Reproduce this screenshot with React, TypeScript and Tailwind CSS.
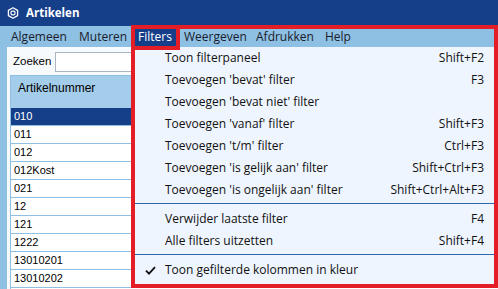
import React from 'react';

const rows = ['010', '011', '012', '012Kost', '021', '12', '121', '1222', '13010201', '13010202'];

const menuItems = [
  { label: 'Algemeen', w: 'w-[68px]' },
  { label: 'Muteren', w: 'w-[59px]' },
  { label: 'Filters', w: 'w-[46px]' },
  { label: 'Weergeven', w: 'w-[72px]' },
  { label: 'Afdrukken', w: 'w-[69px]' },
  { label: 'Help', w: 'w-[38px]' },
];

type Entry = { label: string; shortcut?: string; checked?: boolean } | 'sep';

const filterMenu: Entry[] = [
  { label: 'Toon filterpaneel', shortcut: 'Shift+F2' },
  { label: "Toevoegen 'bevat' filter", shortcut: 'F3' },
  { label: "Toevoegen 'bevat niet' filter" },
  { label: "Toevoegen 'vanaf' filter", shortcut: 'Shift+F3' },
  { label: "Toevoegen 't/m' filter", shortcut: 'Ctrl+F3' },
  { label: "Toevoegen 'is gelijk aan' filter", shortcut: 'Shift+Ctrl+F3' },
  { label: "Toevoegen 'is ongelijk aan' filter", shortcut: 'Shift+Ctrl+Alt+F3' },
  'sep',
  { label: 'Verwijder laatste filter', shortcut: 'F4' },
  { label: 'Alle filters uitzetten', shortcut: 'Shift+F4' },
  'sep',
  { label: 'Toon gefilterde kolommen in kleur', checked: true },
];

function AppIcon() {
  return (
    <svg width="12" height="12" viewBox="0 0 12 12" fill="none">
      <path d="M6 0.8 L10.6 3.4 L10.6 8.6 L6 11.2 L1.4 8.6 L1.4 3.4 Z" stroke="white" strokeWidth="1.3" strokeLinejoin="round" />
      <rect x="4" y="4.2" width="4" height="3.6" rx="1.2" stroke="white" strokeWidth="1.2" />
    </svg>
  );
}

export default function App() {
  return (
    <div className="relative w-[498px] h-[289px] overflow-hidden bg-[#8dc0e3] flex flex-col font-['Open_Sans',sans-serif]">
      {/* titel */}
      <div className="h-[26px] bg-[#163f8a] flex items-center pl-[7px] gap-[7px] shrink-0">
        <AppIcon />
        <span className="text-white font-bold text-[11.5px]">Artikelen</span>
      </div>

      {/* menubalk */}
      <div className="h-[21px] flex items-stretch pl-[4px] text-[12px] text-[#1b1b2b] shrink-0">
        {menuItems.map((item) => (
          <div
            key={item.label}
            className={`flex items-center pl-[7px] whitespace-nowrap ${item.w} ${item.label === 'Filters' ? 'bg-[#163f8a] text-white' : ''}`}
          >
            {item.label}
          </div>
        ))}
      </div>

      {/* inhoud */}
      <div className="flex-1 flex">
        <div className="w-[7px] shrink-0" />
        <div className="flex-1 bg-[#f7fafd] flex flex-col font-['Liberation_Sans',sans-serif] text-[11px] text-black">
          <div className="flex items-center h-[25px] pt-[4px]">
            <span className="ml-[6px] w-[42px] text-[11.5px]">Zoeken</span>
            <div className="flex-1 h-[20px] bg-white border border-[#a8b6c4]" />
          </div>
          <div className="ml-[3px] mt-[3px] flex-1 border-l border-t border-[#8dc0e3] bg-white">
            <div className="h-[32px] bg-[#a3cdea] pl-[7px] pt-[3px] text-[12px]">Artikelnummer</div>
            {rows.map((r, i) => (
              <div
                key={r}
                className={`h-[18px] flex items-center pl-[3px] border-b border-[#8dc0e3] ${i === 0 ? 'bg-[#163f8a] text-white' : ''}`}
              >
                {r}
              </div>
            ))}
          </div>
        </div>
      </div>

      {/* filters dropdown */}
      <div className="absolute left-[135px] top-[47px] w-[360px] h-[240px] bg-[#eef5fe] text-[12px] text-[#111]">
        {filterMenu.map((e, i) =>
          e === 'sep' ? (
            <div key={i} className="h-[7px] pt-[2px]">
              <div className="h-px bg-[#2e6aab]" />
            </div>
          ) : (
            <div key={i} className="h-[22px] flex items-center pr-[11px]">
              <div className="w-[30px] flex justify-center">
                {e.checked && (
                  <svg width="11" height="9" viewBox="0 0 11 9">
                    <path d="M1 4.6 L4 7.6 L10 1.2" stroke="#111" strokeWidth="1.8" fill="none" />
                  </svg>
                )}
              </div>
              <span className="flex-1">{e.label}</span>
              {e.shortcut && <span>{e.shortcut}</span>}
            </div>
          )
        )}
      </div>

      {/* rode markeringen */}
      <div className="absolute left-[131px] top-[25px] w-[367px] h-[263px] border-4 border-[#e41e26]" />
      <div className="absolute left-[131px] top-[25px] w-[49px] h-[25px] border-4 border-[#e41e26]" />
    </div>
  );
}
